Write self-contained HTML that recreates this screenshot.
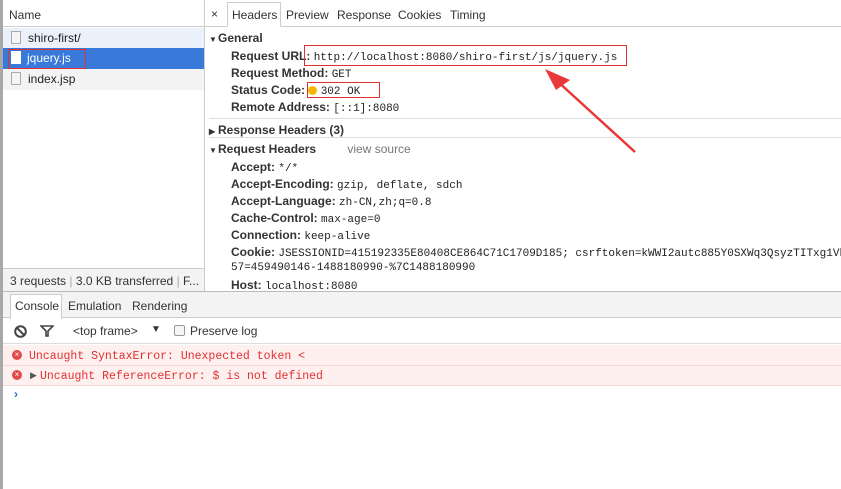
<!DOCTYPE html>
<html><head><meta charset="utf-8"><style>
*{margin:0;padding:0;box-sizing:border-box}
body{width:841px;height:489px;overflow:hidden;background:#fff;font-family:"Liberation Sans",sans-serif;font-size:12px;color:#222;position:relative}
.a{position:absolute;white-space:nowrap}
.m{font-family:"Liberation Mono",monospace;font-size:11px;color:#222}
.b{font-weight:bold;color:#333}
.ico{position:absolute;width:10px;height:13px;border:1px solid #aaa;background:#f4f4f4}
.t{font-size:8px;display:inline-block;width:9px}
</style></head><body>
<div class="a" style="left:0;top:0;width:3px;height:489px;background:#a8a8a8"></div>
<div class="a" style="left:3px;top:0;width:201px;height:27px;border-bottom:1px solid #ccc;background:#fff"></div>
<div class="a" style="left:9px;top:8px;color:#333">Name</div>
<div class="a" style="left:3px;top:28px;width:201px;height:20px;background:#eaf1fb"></div>
<div class="ico" style="left:11px;top:31px"></div>
<div class="a" style="left:28px;top:31px">shiro-first/</div>
<div class="a" style="left:3px;top:48px;width:201px;height:21px;background:#3879d9"></div>
<div class="ico" style="left:11px;top:51px;background:#fff;border-color:#fff"></div>
<div class="a" style="left:27px;top:51px;color:#fff">jquery.js</div>
<div class="a" style="left:8px;top:49px;width:78px;height:20px;border:1px solid #e03030"></div>
<div class="a" style="left:3px;top:69px;width:201px;height:21px;background:#f3f3f3"></div>
<div class="ico" style="left:11px;top:72px"></div>
<div class="a" style="left:28px;top:72px">index.jsp</div>
<div class="a" style="left:3px;top:268px;width:201px;height:23px;border-top:1px solid #ccc;background:#f3f3f3"></div>
<div class="a" style="left:10px;top:274px;color:#333">3 requests <span style="color:#aaa">|</span> 3.0 KB transferred <span style="color:#aaa">|</span> F...</div>
<div class="a" style="left:204px;top:0;width:1px;height:291px;background:#ccc"></div>
<div class="a" style="left:205px;top:26px;width:636px;height:1px;background:#ccc"></div>
<div class="a" style="left:211px;top:7px;color:#333">×</div>
<div class="a" style="left:227px;top:2px;width:54px;height:25px;border:1px solid #ccc;border-bottom:1px solid #fff;background:#fff"></div>
<div class="a" style="left:232px;top:8px;color:#333">Headers</div>
<div class="a" style="left:286px;top:8px;color:#333">Preview</div>
<div class="a" style="left:337px;top:8px;color:#333">Response</div>
<div class="a" style="left:398px;top:8px;color:#333">Cookies</div>
<div class="a" style="left:450px;top:8px;color:#333">Timing</div>
<div class="a b" style="left:209px;top:31px"><span class="t">▼</span>General</div>
<div class="a" style="left:231px;top:49px"><span class="b">Request URL:</span> <span class="m">http://localhost:8080/shiro-first/js/jquery.js</span></div>
<div class="a" style="left:304px;top:45px;width:323px;height:21px;border:1px solid #e03030"></div>
<div class="a" style="left:231px;top:66px"><span class="b">Request Method:</span> <span class="m">GET</span></div>
<div class="a" style="left:231px;top:83px"><span class="b">Status Code:</span> <span style="display:inline-block;width:9px;height:9px;border-radius:50%;background:#f5b800;vertical-align:-1px"></span> <span class="m">302 OK</span></div>
<div class="a" style="left:307px;top:82px;width:73px;height:16px;border:1px solid #e03030"></div>
<div class="a" style="left:231px;top:100px"><span class="b">Remote Address:</span> <span class="m">[::1]:8080</span></div>
<div class="a" style="left:209px;top:118px;width:632px;height:1px;background:#ddd"></div>
<div class="a b" style="left:209px;top:123px"><span class="t">▶</span>Response Headers (3)</div>
<div class="a" style="left:209px;top:137px;width:632px;height:1px;background:#ddd"></div>
<div class="a b" style="left:209px;top:142px"><span class="t">▼</span>Request Headers <span style="font-weight:normal;color:#777;margin-left:28px">view source</span></div>
<div class="a" style="left:231px;top:160px"><span class="b">Accept:</span> <span class="m">*/*</span></div>
<div class="a" style="left:231px;top:177px"><span class="b">Accept-Encoding:</span> <span class="m">gzip, deflate, sdch</span></div>
<div class="a" style="left:231px;top:194px"><span class="b">Accept-Language:</span> <span class="m">zh-CN,zh;q=0.8</span></div>
<div class="a" style="left:231px;top:211px"><span class="b">Cache-Control:</span> <span class="m">max-age=0</span></div>
<div class="a" style="left:231px;top:228px"><span class="b">Connection:</span> <span class="m">keep-alive</span></div>
<div class="a" style="left:231px;top:245px"><span class="b">Cookie:</span> <span class="m">JSESSIONID=415192335E80408CE864C71C1709D185; csrftoken=kWWI2autc885Y0SXWq3QsyzTITxg1Vb</span></div>
<div class="a m" style="left:231px;top:262px">57=459490146-1488180990-%7C1488180990</div>
<div class="a" style="left:231px;top:278px"><span class="b">Host:</span> <span class="m">localhost:8080</span></div>
<svg class="a" style="left:0;top:0" width="841" height="489"><line x1="635" y1="152" x2="556" y2="80" stroke="#e8383a" stroke-width="2.5"/><polygon points="545,69 570,80 556,90" fill="#e8383a"/></svg>
<div class="a" style="left:3px;top:291px;width:838px;height:198px;background:#fff;border-top:1px solid #bbb"></div>
<div class="a" style="left:3px;top:292px;width:838px;height:26px;background:#f3f3f3;border-bottom:1px solid #ccc"></div>
<div class="a" style="left:10px;top:294px;width:52px;height:25px;background:#fff;border:1px solid #ccc;border-bottom:none"></div>
<div class="a" style="left:15px;top:299px;color:#333">Console</div>
<div class="a" style="left:68px;top:299px;color:#333">Emulation</div>
<div class="a" style="left:132px;top:299px;color:#333">Rendering</div>
<div class="a" style="left:3px;top:318px;width:838px;height:26px;border-bottom:1px solid #ddd"></div>
<svg class="a" style="left:14px;top:325px" width="13" height="13"><circle cx="6.5" cy="6.5" r="5.3" fill="none" stroke="#444" stroke-width="2"/><line x1="3" y1="3" x2="10" y2="10" stroke="#444" stroke-width="2"/></svg>
<svg class="a" style="left:40px;top:325px" width="14" height="12"><polygon points="1,1 13,1 8,6 8,11 6,11 6,6" fill="none" stroke="#444" stroke-width="1.6"/></svg>
<div class="a" style="left:73px;top:324px;color:#333">&lt;top frame&gt;</div>
<div class="a" style="left:151px;top:324px;color:#333;font-size:10px">▼</div>
<div class="a" style="left:174px;top:325px;width:11px;height:11px;border:1px solid #999;border-radius:2px;background:#f6f6f6"></div>
<div class="a" style="left:190px;top:324px;color:#333">Preserve log</div>
<div class="a" style="left:3px;top:345px;width:838px;height:41px;background:#fff0f0;border-bottom:1px solid #f5d6d6"></div>
<div class="a" style="left:3px;top:365px;width:838px;height:1px;background:#f5d6d6"></div>
<div class="a" style="left:12px;top:350px;width:10px;height:10px;border-radius:50%;background:#e14a4a;color:#fff;font-size:8px;line-height:10px;text-align:center">×</div>
<div class="a m" style="left:29px;top:350px;color:#e03030;font-size:11.5px">Uncaught SyntaxError: Unexpected token &lt;</div>
<div class="a" style="left:12px;top:370px;width:10px;height:10px;border-radius:50%;background:#e14a4a;color:#fff;font-size:8px;line-height:10px;text-align:center">×</div>
<div class="a" style="left:30px;top:370px;color:#555;font-size:9px">▶</div>
<div class="a m" style="left:40px;top:370px;color:#e03030;font-size:11.5px">Uncaught ReferenceError: $ is not defined</div>
<div class="a" style="left:14px;top:387px;color:#2a6fd6;font-weight:bold">›</div>
</body></html>
